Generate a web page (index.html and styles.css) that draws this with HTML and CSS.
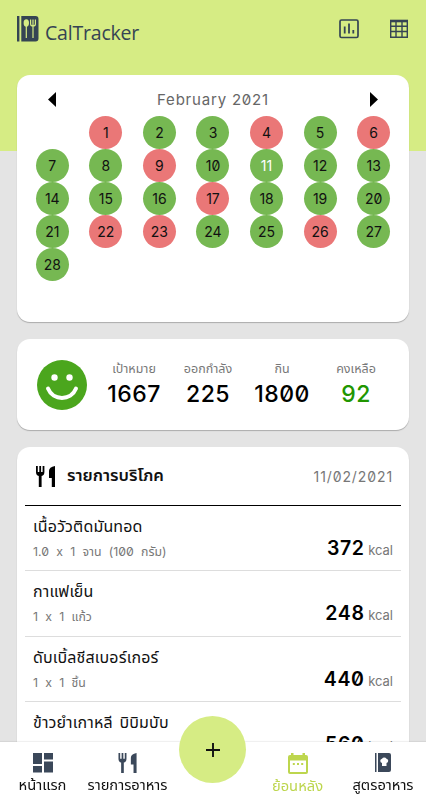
FILE: index.html
```html
<!DOCTYPE html>
<html lang="th">
<head>
    <meta charset="UTF-8">
    <meta name="viewport" content="width=device-width, initial-scale=1.0">
    <title>CalTracker</title>
    <link rel="stylesheet" href="styles.css">
</head>
<body>
    <header class="header">
        <div class="logo">
            <svg width="22" height="26" viewBox="0 0 22 26">
                <path fill="#354453" d="M0 0h2.4v25.5H0zM4.3 0H18.5a3 3 0 0 1 3 3v19.500a3 3 0 0 1-3 3H4.3z"/>
                <ellipse cx="9.3" cy="7" rx="2.7" ry="3.7" fill="#d6ec84"/>
                <path fill="none" stroke="#d6ec84" stroke-width="1.2" d="M9.300 10v12M16 9v13M13.600 3.500v4.500q0 2 2.400 2t2.400-2V3.500M16 3.500v6"/>
            </svg>
            <span class="logo-text">CalTracker</span>
        </div>
        <div class="header-icons">
            <svg width="20" height="20" viewBox="0 0 20 20" fill="none" stroke="#354453">
                <rect x="1" y="1" width="18" height="17.5" rx="1.5" stroke-width="1.7"/>
                <path stroke-width="1.8" d="M5.7 7.500v7M10 4.500v10M14.300 11v3.500"/>
            </svg>
            <svg width="20" height="20" viewBox="0 0 20 20" fill="none" stroke="#354453" stroke-width="1.4">
                <path d="M1.700 1v18M7 1v18M13 1v18M18.300 1v18M1 7.300h18M1 12.500h18M1 18.200h18"/>
                <path stroke-width="2.6" d="M1 2h18"/>
            </svg>
        </div>
    </header>

    <main class="content">
        <!-- Calendar -->
        <section class="card calendar">
            <div class="month">
                <svg width="8" height="15" viewBox="0 0 8 15"><path d="M8 0v15L0 7.500z"/></svg>
                <span class="month-name">February 2021</span>
                <svg width="8" height="15" viewBox="0 0 8 15"><path d="M0 0v15l8-7.500z"/></svg>
            </div>
            <div class="days">
                <span class="day over first">1</span>
                <span class="day">2</span>
                <span class="day">3</span>
                <span class="day over">4</span>
                <span class="day">5</span>
                <span class="day over">6</span>
                <span class="day">7</span>
                <span class="day">8</span>
                <span class="day over">9</span>
                <span class="day">10</span>
                <span class="day selected">11</span>
                <span class="day">12</span>
                <span class="day">13</span>
                <span class="day">14</span>
                <span class="day">15</span>
                <span class="day">16</span>
                <span class="day over">17</span>
                <span class="day">18</span>
                <span class="day">19</span>
                <span class="day">20</span>
                <span class="day">21</span>
                <span class="day over">22</span>
                <span class="day over">23</span>
                <span class="day">24</span>
                <span class="day">25</span>
                <span class="day over">26</span>
                <span class="day">27</span>
                <span class="day">28</span>
            </div>
        </section>

        <!-- Daily summary -->
        <section class="card summary">
            <svg class="smile" width="50" height="50" viewBox="0 0 50 50">
                <circle cx="25" cy="25" r="25" fill="#4ba61d"/>
                <circle cx="17.5" cy="17.5" r="3.2" fill="#fff"/>
                <circle cx="32.5" cy="17.5" r="3.2" fill="#fff"/>
                <path d="M11 28.500c5 12.500 23 12.500 28 0" fill="none" stroke="#fff" stroke-width="4" stroke-linecap="round"/>
            </svg>
            <div class="stat"><span class="stat-label">เป้าหมาย</span><span class="stat-value">1667</span></div>
            <div class="stat"><span class="stat-label">ออกกำลัง</span><span class="stat-value">225</span></div>
            <div class="stat"><span class="stat-label">กิน</span><span class="stat-value">1800</span></div>
            <div class="stat"><span class="stat-label">คงเหลือ</span><span class="stat-value left">92</span></div>
        </section>

        <!-- Food list -->
        <section class="card foods">
            <div class="foods-head">
                <svg width="20" height="21" viewBox="0 0 20 21">
                    <path d="M0 0h1.800v6h1.500V0h1.800v6h1.500V0h1.800v6q0 3.500-2.800 4v11H2.800V10Q0 9.500 0 6zM19 0v21h-3.200v-9H13V5q0-4 6-5z"/>
                </svg>
                <h2>รายการบริโภค</h2>
                <span class="date">11/02/2021</span>
            </div>
            <div class="food">
                <div class="food-info"><span class="food-name">เนื้อวัวติดมันทอด</span><span class="amount">1.0 x 1 จาน (100 กรัม)</span></div>
                <div class="kcal"><b>372</b> kcal</div>
            </div>
            <div class="food">
                <div class="food-info"><span class="food-name">กาแฟเย็น</span><span class="amount">1 x 1 แก้ว</span></div>
                <div class="kcal"><b>248</b> kcal</div>
            </div>
            <div class="food">
                <div class="food-info"><span class="food-name">ดับเบิ้ลชีสเบอร์เกอร์</span><span class="amount">1 x 1 ชิ้น</span></div>
                <div class="kcal"><b>440</b> kcal</div>
            </div>
            <div class="food">
                <div class="food-info"><span class="food-name">ข้าวยำเกาหลี บิบิมบับ</span></div>
                <div class="kcal"><b>560</b> kcal</div>
            </div>
        </section>
    </main>

    <nav class="nav">
        <a class="nav-item">
            <svg width="20" height="20" viewBox="0 0 20 20"><path d="M0 0h9v11H0zM11 0h9v6.500h-9zM0 13h9v6.500H0zM11 8.500h9v11h-9z"/></svg>
            <span>หน้าแรก</span>
        </a>
        <a class="nav-item">
            <svg width="20" height="20" viewBox="0 0 20 21">
                <path d="M0 0h1.800v6h1.500V0h1.800v6h1.500V0h1.800v6q0 3.500-2.800 4v11H2.800V10Q0 9.500 0 6zM19 0v21h-3.200v-9H13V5q0-4 6-5z"/>
            </svg>
            <span>รายการอาหาร</span>
        </a>
        <a class="nav-item add"><svg width="16" height="16" viewBox="0 0 16 16"><path d="M8 1v14M1 8h14" stroke="#111" stroke-width="1.9"/></svg></a>
        <a class="nav-item active">
            <svg width="20" height="21" viewBox="0 0 20 21">
                <path fill-rule="evenodd" d="M3 0h2.500v2h9V0H17v2h1q2 0 2 2v15q0 2-2 2H2q-2 0-2-2V4q0-2 2-2h1zM2 7.500v11.500h16V7.500z"/>
                <path d="M4.800 10h2v2h-2zM9 10h2v2H9zM13.200 10h2v2h-2z"/>
            </svg>
            <span>ย้อนหลัง</span>
        </a>
        <a class="nav-item">
            <svg width="16" height="20" viewBox="0 0 16 20">
                <path d="M0 0h1.500v19H0zM3 0h11q2 0 2 2v15q0 2-2 2H3z"/>
                <path fill="#fff" d="M7 13v-3a2.200 2.200 0 0 1 0-4.300 2.700 2.700 0 0 1 4.500 0 2.200 2.200 0 0 1 0 4.300v3z"/>
            </svg>
            <span>สูตรอาหาร</span>
        </a>
    </nav>
</body>
</html>
```
FILE: styles.css
```css
* {
    box-sizing: border-box;
}
body {
    margin: 0;
    height: 800px;
    overflow: hidden;
    font-family: Inter, "Noto Sans Thai", "Noto Sans", sans-serif;
    font-feature-settings: "zero", "calt" 0; /* slashed zeros, plain x */
    color: #111;
    background: linear-gradient(#d6ec84 151px, #e4e4e4 151px);
}
.header {
    height: 75px;
    padding: 16px 17px 0;
    display: flex;
    justify-content: space-between;
}
.logo {
    display: flex;
    gap: 6px;
}
.logo-text {
    font-family: "Open Sans", sans-serif;
    font-size: 19.5px;
    line-height: 33px;
    letter-spacing: -0.2px;
    color: #354453;
}
.header-icons {
    display: flex;
    gap: 30px;
    padding-top: 3px;
}
.content {
    padding: 0 17px;
    display: flex;
    flex-direction: column;
    gap: 17px;
}
.card {
    background: #fff;
    border-radius: 13px;
    box-shadow: 0 1px 1px rgba(0, 0, 0, 0.25);
}
.calendar {
    height: 247px;
    padding: 17px 8.5px 0;
}
.month {
    display: flex;
    justify-content: space-between;
    padding: 0 22px;
    height: 24px;
}
.month-name {
    font-size: 15px;
    line-height: 15px;
    letter-spacing: 0.8px;
    color: #666;
}
.days {
    display: grid;
    grid-template-columns: repeat(7, 1fr);
    grid-auto-rows: 33px;
    justify-items: center;
}
.day {
    width: 33px;
    height: 33px;
    line-height: 33px;
    border-radius: 50%;
    background: #76b852;
    font-size: 14px;
    text-align: center;
}
.over {
    background: #ea7777;
}
.selected {
    color: #fff;
}
.first {
    grid-column: 2;
}
.summary {
    height: 91px;
    display: grid;
    grid-template-columns: 60px 74px 74px 74px 74px;
    padding: 21px 0 0 20px;
}
.stat {
    display: flex;
    flex-direction: column;
    align-items: center;
}
.stat-label {
    font-size: 12.5px;
    line-height: 17px;
    color: #777;
    white-space: nowrap;
}
.stat-value {
    font-size: 23px;
    line-height: 34px;
    letter-spacing: 0.5px;
    font-weight: 500;
    color: #000;
}
.stat-value.left {
    color: #219600;
}
.foods {
    height: 340px;
    padding: 0 8px;
}
.foods-head {
    height: 59px;
    display: flex;
    align-items: center;
    padding: 0 8px 0 11px;
    border-bottom: 1px solid #000;
}
.foods-head h2 {
    margin: 0 0 0 11px;
    font-size: 16.7px;
    font-weight: 600;
}
.date {
    margin-left: auto;
    font-size: 14px;
    letter-spacing: 0.9px;
    color: #777;
}
.food {
    height: 65.3px;
    padding: 7px 8px 0;
    display: flex;
    justify-content: space-between;
    border-bottom: 1px solid #ddd;
}
.food-info {
    display: flex;
    flex-direction: column;
}
.food-name {
    font-size: 16px;
    line-height: 26px;
    letter-spacing: 0.15px;
    word-spacing: 2px;
    white-space: nowrap;
}
.amount {
    font-size: 12.3px;
    line-height: 26px;
    word-spacing: 3.8px;
    color: #777;
}
.kcal {
    padding-top: 23px;
    font-size: 13px;
    line-height: 24px;
    color: #777;
}
.kcal b {
    font-size: 19.5px;
    letter-spacing: 0.6px;
    font-weight: 600;
    color: #000;
}
.nav {
    position: fixed;
    left: 0;
    bottom: 0;
    width: 426px;
    height: 58px;
    display: grid;
    grid-template-columns: 85px 85px 85px 85px 86px;
    background: #fff;
    box-shadow: 0 -1px 1px rgba(0, 0, 0, 0.06);
    font-size: 14.7px;
}
.nav-item {
    display: flex;
    flex-direction: column;
    align-items: center;
    padding-top: 11px;
    line-height: 24px;
    white-space: nowrap;
    fill: #3b485a;
}
.nav-item.active {
    color: #bdd64e;
    fill: #bdd64e;
}
.nav-item.add {
    width: 67px;
    height: 67px;
    margin: -26px auto 0;
    padding: 0;
    justify-content: center;
    border-radius: 50%;
    background: #d6ec84;
}
```
